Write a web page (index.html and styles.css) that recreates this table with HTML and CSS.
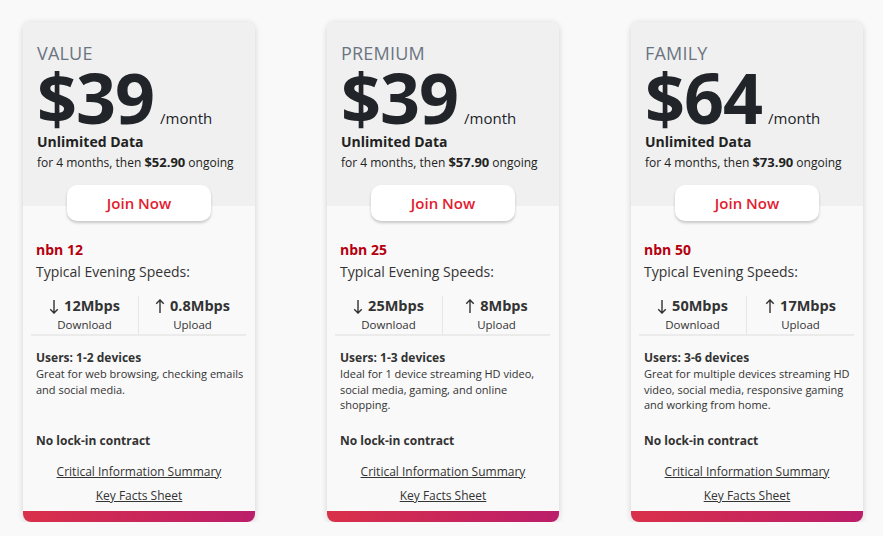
FILE: index.html
```html
<!DOCTYPE html>
<html lang="en">
<head>
<meta charset="utf-8">
<title>Plans</title>
<link rel="stylesheet" href="styles.css">
</head>
<body>
<div class="cards">
  <div class="card">
    <div class="head">
      <div class="tier">VALUE</div>
      <div class="price"><span class="amount">$39</span><span class="per">/month</span></div>
      <div class="data">Unlimited Data</div>
      <div class="sub">for 4 months, then <b>$52.90</b> ongoing</div>
    </div>
    <div class="btn-wrap"><a class="btn" href="#">Join Now</a></div>
    <div class="body">
      <div class="nbn">nbn 12</div>
      <div class="typ">Typical Evening Speeds:</div>
      <div class="speeds">
        <div class="sp"><div class="val"><svg class="arr" viewBox="0 0 10 16"><path d="M5 1V15M1 11L5 15L9 11"/></svg>12Mbps</div><div class="lbl">Download</div></div>
        <div class="sp"><div class="val"><svg class="arr" viewBox="0 0 10 16"><path d="M5 15V1M1 5L5 1L9 5"/></svg>0.8Mbps</div><div class="lbl">Upload</div></div>
      </div>
      <div class="users">Users: 1-2 devices</div>
      <div class="desc">Great for web browsing, checking emails and social media.</div>
      <div class="lock">No lock-in contract</div>
      <div class="links"><a href="#">Critical Information Summary</a><a href="#">Key Facts Sheet</a></div>
    </div>
    <div class="bar"></div>
  </div>
  <div class="card">
    <div class="head">
      <div class="tier">PREMIUM</div>
      <div class="price"><span class="amount">$39</span><span class="per">/month</span></div>
      <div class="data">Unlimited Data</div>
      <div class="sub">for 4 months, then <b>$57.90</b> ongoing</div>
    </div>
    <div class="btn-wrap"><a class="btn" href="#">Join Now</a></div>
    <div class="body">
      <div class="nbn">nbn 25</div>
      <div class="typ">Typical Evening Speeds:</div>
      <div class="speeds">
        <div class="sp"><div class="val"><svg class="arr" viewBox="0 0 10 16"><path d="M5 1V15M1 11L5 15L9 11"/></svg>25Mbps</div><div class="lbl">Download</div></div>
        <div class="sp"><div class="val"><svg class="arr" viewBox="0 0 10 16"><path d="M5 15V1M1 5L5 1L9 5"/></svg>8Mbps</div><div class="lbl">Upload</div></div>
      </div>
      <div class="users">Users: 1-3 devices</div>
      <div class="desc">Ideal for 1 device streaming HD video, social media, gaming, and online shopping.</div>
      <div class="lock">No lock-in contract</div>
      <div class="links"><a href="#">Critical Information Summary</a><a href="#">Key Facts Sheet</a></div>
    </div>
    <div class="bar"></div>
  </div>
  <div class="card">
    <div class="head">
      <div class="tier">FAMILY</div>
      <div class="price"><span class="amount">$64</span><span class="per">/month</span></div>
      <div class="data">Unlimited Data</div>
      <div class="sub">for 4 months, then <b>$73.90</b> ongoing</div>
    </div>
    <div class="btn-wrap"><a class="btn" href="#">Join Now</a></div>
    <div class="body">
      <div class="nbn">nbn 50</div>
      <div class="typ">Typical Evening Speeds:</div>
      <div class="speeds">
        <div class="sp"><div class="val"><svg class="arr" viewBox="0 0 10 16"><path d="M5 1V15M1 11L5 15L9 11"/></svg>50Mbps</div><div class="lbl">Download</div></div>
        <div class="sp"><div class="val"><svg class="arr" viewBox="0 0 10 16"><path d="M5 15V1M1 5L5 1L9 5"/></svg>17Mbps</div><div class="lbl">Upload</div></div>
      </div>
      <div class="users">Users: 3-6 devices</div>
      <div class="desc">Great for multiple devices streaming HD video, social media, responsive gaming and working from home.</div>
      <div class="lock">No lock-in contract</div>
      <div class="links"><a href="#">Critical Information Summary</a><a href="#">Key Facts Sheet</a></div>
    </div>
    <div class="bar"></div>
  </div>
</div>
</body>
</html>
```
FILE: styles.css
```css
* { box-sizing: border-box; }
html, body { margin: 0; padding: 0; }
body {
  background: #f9f9f9;
  font-family: "Open Sans", "Liberation Sans", sans-serif;
  color: #222;
}
.cards {
  display: flex;
  gap: 72px;
  padding: 22px 0 0 23px;
}
.card {
  width: 232px;
  height: 500px;
  background: #f9f9f9;
  border-radius: 8px;
  overflow: hidden;
  box-shadow: 0 1px 6px rgba(0,0,0,0.16);
  display: flex;
  flex-direction: column;
}
.head {
  background: #f0f0f0;
  padding: 21px 13px 12px 14px;
}
.tier {
  font-size: 18px;
  line-height: 20px;
  color: #6b7581;
  letter-spacing: 0.2px;
}
.price {
  display: flex;
  align-items: baseline;
  gap: 6px;
  margin-top: 1px;
}
.amount {
  font-size: 70px;
  font-weight: 700;
  line-height: 66px;
  color: #212529;
  letter-spacing: -1px;
}
.per {
  font-size: 15px;
  line-height: 20px;
  color: #212529;
}
.data {
  font-size: 14px;
  font-weight: 700;
  line-height: 20px;
  margin-top: 2px;
}
.sub {
  font-size: 12px;
  line-height: 20px;
}
.sub b { font-size: 13px; }
.btn-wrap {
  background: linear-gradient(#f0f0f0 0 21px, #f9f9f9 21px);
  display: flex;
  justify-content: center;
}
.btn {
  width: 144px;
  height: 36px;
  background: #fff;
  border-radius: 10px;
  box-shadow: 0 2px 3px rgba(0,0,0,0.2);
  color: #e1202f;
  font-size: 15px;
  font-weight: 600;
  text-decoration: none;
  display: flex;
  align-items: center;
  justify-content: center;
}
.body {
  padding: 19px 9px 0 13px;
  flex: 1;
}
.nbn {
  color: #b5000f;
  font-size: 14px;
  font-weight: 700;
  line-height: 20px;
}
.typ {
  font-size: 14px;
  line-height: 23px;
  color: #333;
}
.speeds {
  display: flex;
  margin: 13px 0 0 -5px;
  border-bottom: 2px solid #ebebeb;
}
.sp {
  flex: 1;
  text-align: center;
  padding: 0;
}
.sp + .sp { border-left: 1px solid #e6e6e6; }
.val {
  font-size: 14.5px;
  font-weight: 700;
  line-height: 20px;
  color: #333;
  display: flex;
  align-items: center;
  justify-content: center;
  gap: 5px;
}
.arr {
  width: 10px;
  height: 15px;
  fill: none;
  stroke: #333;
  stroke-width: 1.5;
}
.lbl {
  font-size: 11.5px;
  line-height: 18px;
  color: #333;
}
.users {
  margin-top: 13px;
  font-size: 12px;
  font-weight: 700;
  line-height: 17px;
  color: #333;
}
.desc {
  font-size: 11px;
  line-height: 15.5px;
  color: #333;
  height: 66px;
  padding-right: 2px;
}
.lock {
  font-size: 12px;
  font-weight: 700;
  line-height: 18px;
  color: #333;
}
.links {
  display: flex;
  flex-direction: column;
  align-items: center;
  gap: 8px;
  margin-top: 14px;
  margin-left: -4px;
}
.links a {
  font-size: 12px;
  line-height: 16px;
  color: #333;
  text-decoration: underline;
}
.bar {
  height: 11px;
  background: linear-gradient(90deg, #d9304a, #bb1e6a);
}
```
